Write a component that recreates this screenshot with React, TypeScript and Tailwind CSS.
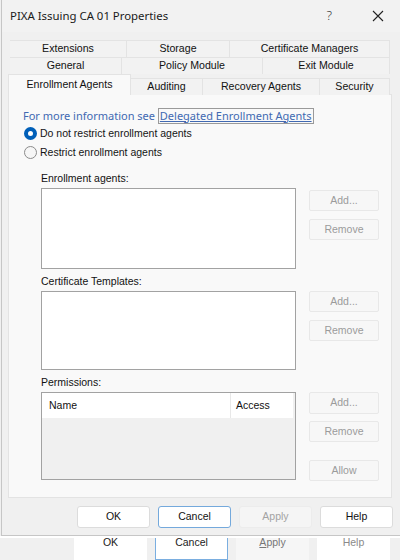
import React from 'react';

type Tab = { label: string; w: string };

const rowOne: Tab[] = [
  { label: 'Extensions', w: 'w-[117px]' },
  { label: 'Storage', w: 'w-[103px]' },
  { label: 'Certificate Managers', w: 'w-[160px]' },
];

const rowTwo: Tab[] = [
  { label: 'General', w: 'w-[112px]' },
  { label: 'Policy Module', w: 'w-[141px]' },
  { label: 'Exit Module', w: 'w-[127px]' },
];

const rowThree: Tab[] = [
  { label: 'Auditing', w: 'w-[72px]' },
  { label: 'Recovery Agents', w: 'w-[117px]' },
  { label: 'Security', w: 'w-[70px]' },
];

const TabCell = ({ tab }: { tab: Tab }) => (
  <div
    className={`${tab.w} h-[17px] flex items-center justify-center bg-[#f2f2f2] border-t border-r border-[#e3e3e3] text-[10.6px] text-[#111]`}
  >
    {tab.label}
  </div>
);

const SideButton = ({ label, className = '' }: { label: string; className?: string }) => (
  <div
    className={`w-[70px] h-[21px] flex items-center justify-center bg-[#f7f7f7] border border-[#e8e8e8] rounded-[2px] text-[10.5px] text-[#9b9b9b] ${className}`}
  >
    {label}
  </div>
);

const Radio = ({ checked, label }: { checked?: boolean; label: string }) => (
  <div className="h-[19px] flex items-center gap-[3px]">
    {checked ? (
      <div className="ml-px w-[13px] h-[13px] rounded-full border-[4px] border-[#005fb8] bg-white" />
    ) : (
      <div className="ml-px w-[13px] h-[13px] rounded-full border border-[#8b8b8b] bg-[#f6f6f6]" />
    )}
    <span className="text-[10.5px] text-[#141414]">{label}</span>
  </div>
);

const FooterButton = ({
  label,
  variant = 'normal',
}: {
  label: string;
  variant?: 'normal' | 'focus' | 'disabled';
}) => (
  <div
    className={
      variant === 'focus'
        ? 'w-[73px] h-[22px] flex items-center justify-center bg-white border border-[#74a9dc] rounded-[3px] text-[10.5px] text-[#111]'
        : variant === 'disabled'
          ? 'w-[73px] h-[22px] flex items-center justify-center bg-[#f5f5f5] border border-[#ececec] rounded-[3px] text-[10.5px] text-[#a3a3a3]'
          : 'w-[73px] h-[22px] flex items-center justify-center bg-white border border-[#dcdcdc] rounded-[3px] text-[10.5px] text-[#111]'
    }
  >
    {label}
  </div>
);

export default function App() {
  return (
    <div className="w-[400px] h-[560px] overflow-hidden bg-[#f0f0f0] font-['Liberation_Sans',Arial,sans-serif] text-[#111]">
      {/* dialog window */}
      <div className="h-[536px] ml-px border-l border-b border-[#c6c6c6] flex flex-col">
        {/* title bar */}
        <div className="h-[32px] flex items-center pl-[8px] bg-[#f2f2f2]">
          <span className="font-['Noto_Sans',sans-serif] text-[11.4px] text-[#1a1a1a]">
            PIXA Issuing CA 01 Properties
          </span>
          <span className="ml-auto font-['Noto_Sans',sans-serif] text-[13px] font-light text-[#333] mr-[40px]">
            ?
          </span>
          <svg width="12" height="12" viewBox="0 0 12 12" className="mr-[16px]">
            <path d="M1 1 L11 11 M11 1 L1 11" stroke="#222" strokeWidth="1.1" fill="none" />
          </svg>
        </div>

        {/* tabs */}
        <div className="mt-[8px] ml-[8px] flex">
          {rowOne.map((t) => (
            <TabCell key={t.label} tab={t} />
          ))}
        </div>
        <div className="ml-[8px] flex">
          {rowTwo.map((t) => (
            <TabCell key={t.label} tab={t} />
          ))}
        </div>
        <div className="ml-[6px] flex items-end -mb-px relative z-10">
          <div className="w-[123px] h-[21px] flex items-start pt-[2px] justify-center bg-[#f9f9f9] border-t border-l border-r border-[#e3e3e3] text-[10.6px] text-[#111]">
            Enrollment Agents
          </div>
          {rowThree.map((t) => (
            <TabCell key={t.label} tab={t} />
          ))}
        </div>

        {/* panel */}
        <div className="w-[384px] h-[404px] ml-[6px] bg-[#f9f9f9] border border-[#e3e3e3] pt-[13px] pl-[14px]">
          <div className="h-[16px] flex items-center font-['Noto_Sans',sans-serif] text-[11px] text-[#4169b2]">
            <span>For more information see&nbsp;</span>
            <span className="h-[16px] flex items-center border border-[#9a9a9a] px-px underline">
              Delegated Enrollment Agents
            </span>
          </div>
          <Radio checked label="Do not restrict enrollment agents" />
          <Radio label="Restrict enrollment agents" />

          {/* enrollment agents */}
          <div className="ml-[18px] mt-[8px] flex">
            <div className="w-[255px]">
              <div className="h-[16px] leading-[16px] text-[10.5px]">Enrollment agents:</div>
              <div className="mt-[2px] h-[81px] bg-white border border-[#a2a2a2]" />
            </div>
            <div className="ml-[13px] pt-[20px] flex flex-col gap-[8px]">
              <SideButton label="Add..." />
              <SideButton label="Remove" />
            </div>
          </div>

          {/* certificate templates */}
          <div className="ml-[18px] mt-[4px] flex">
            <div className="w-[255px]">
              <div className="h-[16px] leading-[16px] text-[10.5px]">Certificate Templates:</div>
              <div className="mt-[2px] h-[79px] bg-white border border-[#a2a2a2]" />
            </div>
            <div className="ml-[13px] pt-[18px] flex flex-col gap-[8px]">
              <SideButton label="Add..." />
              <SideButton label="Remove" />
            </div>
          </div>

          {/* permissions */}
          <div className="ml-[18px] mt-[4px] flex">
            <div className="w-[255px]">
              <div className="h-[16px] leading-[16px] text-[10.5px]">Permissions:</div>
              <div className="mt-[2px] h-[88px] bg-[#f0f0f0] border border-[#a2a2a2]">
                <div className="w-[251px] h-[25px] bg-white flex items-center text-[10.5px]">
                  <div className="w-[189px] h-full flex items-center pl-[7px] border-r border-[#e8e8e8]">
                    Name
                  </div>
                  <div className="pl-[5px]">Access</div>
                </div>
              </div>
            </div>
            <div className="ml-[13px] pt-[18px] flex flex-col">
              <SideButton label="Add..." className="h-[22px]" />
              <SideButton label="Remove" className="mt-[7px]" />
              <SideButton label="Allow" className="mt-[18px]" />
            </div>
          </div>
        </div>

        {/* footer buttons */}
        <div className="mt-[8px] ml-[75px] flex gap-[8px]">
          <FooterButton label="OK" />
          <FooterButton label="Cancel" variant="focus" />
          <FooterButton label="Apply" variant="disabled" />
          <FooterButton label="Help" />
        </div>
      </div>

      {/* lower edge of the dialog behind, partly visible */}
      <div className="h-[2px] bg-white" />
      <div className="h-[22px] overflow-hidden flex gap-[8px] pl-[74px]">
        <div className="w-[73px] h-[22px] bg-white flex justify-center text-[10.5px] text-[#222]">
          <span className="leading-[12px] -mt-[2px]">OK</span>
        </div>
        <div className="w-[73px] h-[22px] bg-white border-l border-r border-b border-[#7aaee0] flex justify-center text-[10.5px] text-[#222]">
          <span className="leading-[12px] -mt-[2px]">Cancel</span>
        </div>
        <div className="w-[73px] h-[22px] bg-[#f6f6f6] flex justify-center text-[10.5px] text-[#777]">
          <span className="leading-[12px] -mt-[2px]">
            <span className="underline">A</span>pply
          </span>
        </div>
        <div className="w-[73px] h-[22px] bg-white flex justify-center text-[10.5px] text-[#8a8a8a]">
          <span className="leading-[12px] -mt-[2px]">Help</span>
        </div>
      </div>
    </div>
  );
}
